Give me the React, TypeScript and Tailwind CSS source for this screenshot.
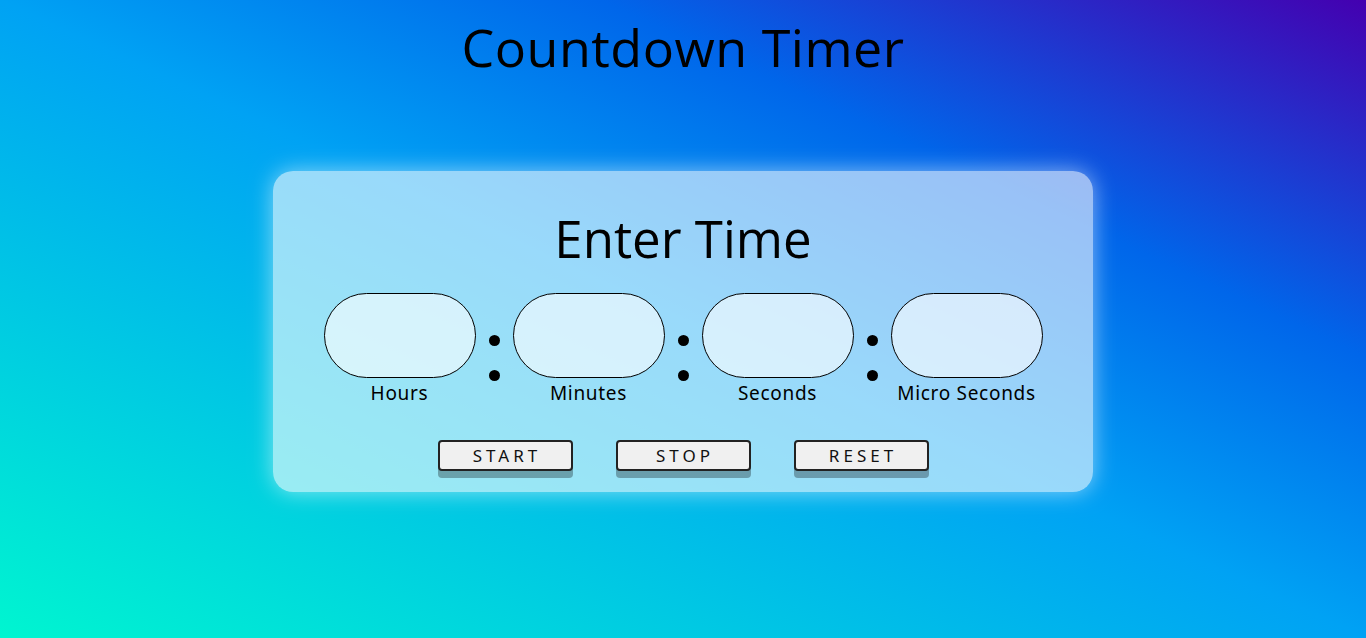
import React from "react"

const fields = ["Hours", "Minutes", "Seconds", "Micro Seconds"]
const buttons = ["START", "STOP", "RESET"]

function Colon() {
  return (
    <div className="w-[37px] h-[85px] flex flex-col items-center justify-end">
      <span className="block w-[11px] h-[11px] rounded-full bg-black mb-[24px]" />
      <span className="block w-[11px] h-[11px] rounded-full bg-black mb-[-3px]" />
    </div>
  )
}

export default function App() {
  return (
    <div
      className="w-full h-[638px] overflow-hidden flex flex-col items-center bg-[linear-gradient(to_top_right,#00f5d0_0%,#00a2f4_50%,#0066ea_72%,#4400b0_100%)]"
      style={{ fontFamily: "'Open Sans', 'Noto Sans', sans-serif" }}
    >
      <h1 className="mt-[14px] h-[66px] flex items-center text-[52px] leading-none font-normal text-black tracking-[0.5px]">
        Countdown Timer
      </h1>

      <div className="mt-[91px] w-[820px] h-[321px] rounded-[20px] bg-white/60 shadow-[0_0_22px_rgba(255,255,255,0.55)] flex flex-col items-center px-[50px]">
        <h2 className="mt-[38px] h-[58px] flex items-center text-[51px] leading-none font-normal text-black">
          Enter Time
        </h2>

        <div className="mt-[26px] flex items-start">
          {fields.map((f, i) => (
            <React.Fragment key={f}>
              {i > 0 && <Colon />}
              <div className="flex flex-col items-center w-[152px]">
                <input
                  type="text"
                  className="w-[152px] h-[85px] rounded-full border border-black bg-white/60 outline-none"
                />
                <span
                  className="mt-[4px] text-[19px] leading-[22px] text-black tracking-[0.7px] whitespace-nowrap"
                  style={{ fontFamily: "'Noto Sans', sans-serif" }}
                >
                  {f}
                </span>
              </div>
            </React.Fragment>
          ))}
        </div>

        <div className="mt-[36px] flex gap-[43px]">
          {buttons.map((b) => (
            <button
              key={b}
              className="w-[135px] h-[31px] rounded-[4px] border-2 border-[#222] bg-[#f0f0f0] text-[17px] leading-none tracking-[4px] text-[#111] shadow-[0_7px_0_rgba(0,0,0,0.3)] flex items-center justify-center pl-[4px]"
              style={{ fontFamily: "'Noto Sans', sans-serif" }}
            >
              {b}
            </button>
          ))}
        </div>
      </div>
    </div>
  )
}
